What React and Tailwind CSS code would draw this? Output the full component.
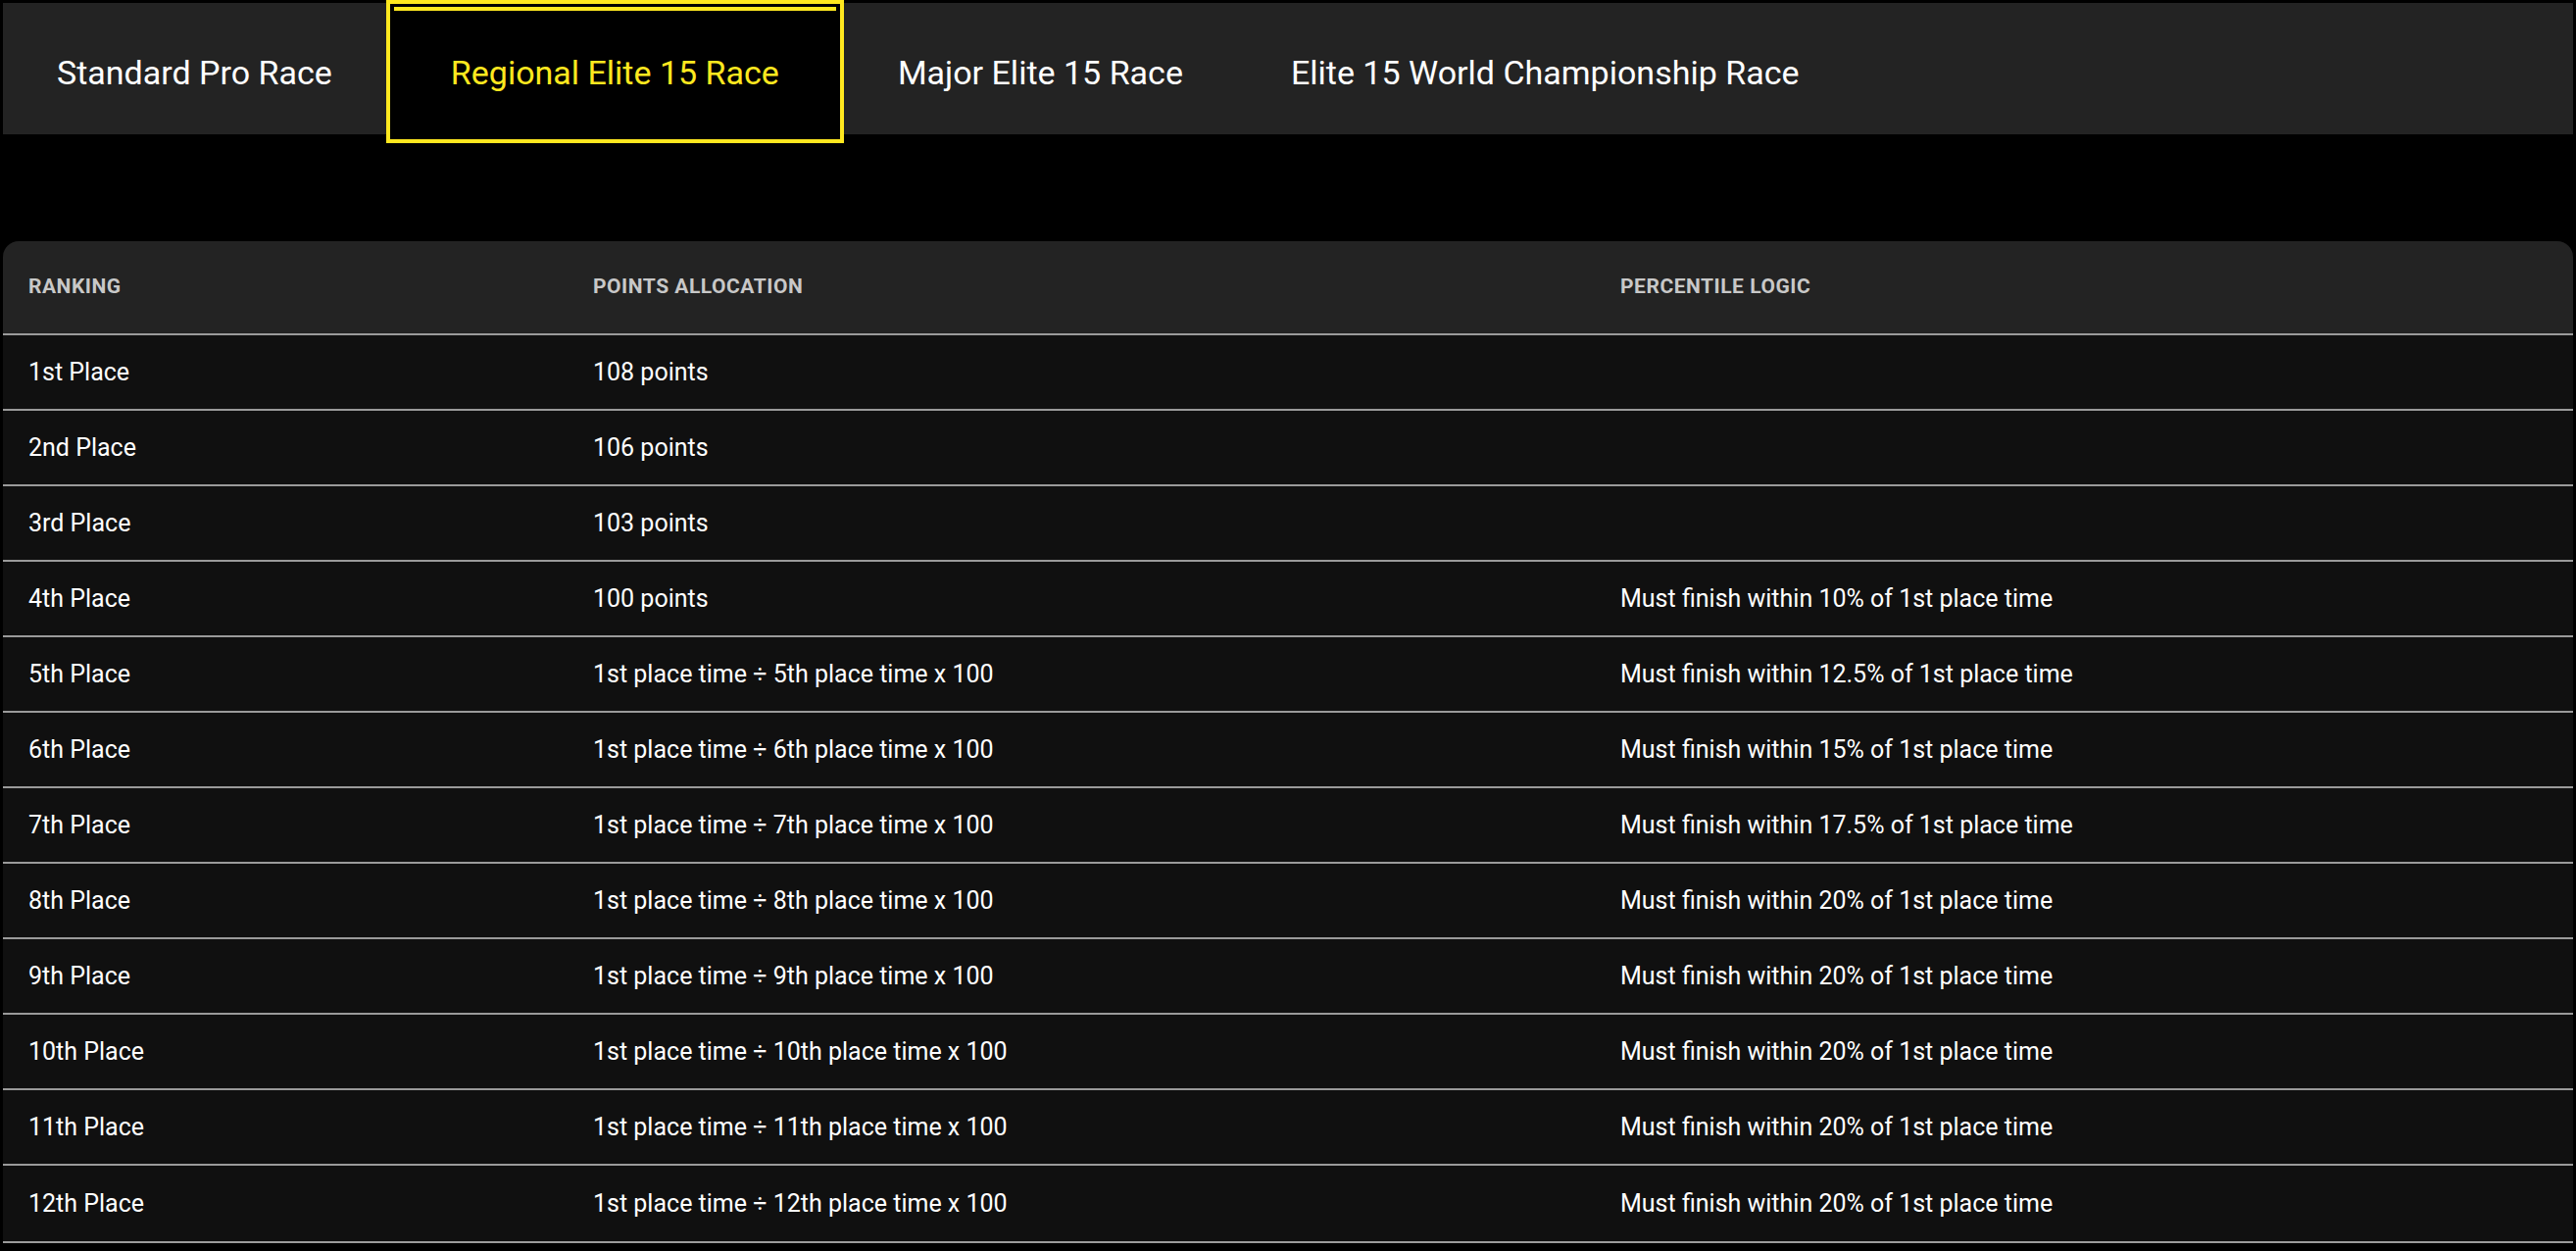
const tabs = ['Standard Pro Race', 'Regional Elite 15 Race', 'Major Elite 15 Race', 'Elite 15 World Championship Race'];

const rows = [
  ['1st Place', '108 points', ''],
  ['2nd Place', '106 points', ''],
  ['3rd Place', '103 points', ''],
  ['4th Place', '100 points', 'Must finish within 10% of 1st place time'],
  ['5th Place', '1st place time ÷ 5th place time x 100', 'Must finish within 12.5% of 1st place time'],
  ['6th Place', '1st place time ÷ 6th place time x 100', 'Must finish within 15% of 1st place time'],
  ['7th Place', '1st place time ÷ 7th place time x 100', 'Must finish within 17.5% of 1st place time'],
  ['8th Place', '1st place time ÷ 8th place time x 100', 'Must finish within 20% of 1st place time'],
  ['9th Place', '1st place time ÷ 9th place time x 100', 'Must finish within 20% of 1st place time'],
  ['10th Place', '1st place time ÷ 10th place time x 100', 'Must finish within 20% of 1st place time'],
  ['11th Place', '1st place time ÷ 11th place time x 100', 'Must finish within 20% of 1st place time'],
  ['12th Place', '1st place time ÷ 12th place time x 100', 'Must finish within 20% of 1st place time'],
];

export default function App() {
  const active = 1;
  return (
    <div className="min-h-[1276px] bg-black px-[3px] font-[Roboto,sans-serif] text-white">
      {/* tabs */}
      <div className="relative flex h-[146px] items-start">
        <div className="absolute left-0 right-0 top-[3px] h-[134px] bg-[#232323]" />
        {tabs.map((t, i) =>
          i === active ? (
            <div key={t} className="relative flex h-[146px] items-start border-4 border-[#ffe81f] bg-black px-[62px]">
              <div className="absolute left-[4px] right-[4px] top-[3px] h-[4px] bg-[#ffe81f]" />
              <span className="mt-[50px] text-[34px] leading-[40px] text-[#ffe81f]">{t}</span>
            </div>
          ) : (
            <div key={t} className="relative flex h-[137px] items-start px-[55px]">
              <span className="mt-[54px] text-[34px] leading-[40px]">{t}</span>
            </div>
          )
        )}
      </div>

      {/* table */}
      <div className="mt-[100px] overflow-hidden rounded-t-[16px] border-b-2 border-[#9a9a9a]">
        <div className="flex h-[96px] items-center border-b-2 border-[#9a9a9a] bg-[#232323] pl-[26px] text-[21px] font-bold tracking-wide text-[#c8c8c8]">
          <div className="w-[576px]">RANKING</div>
          <div className="w-[1048px]">POINTS ALLOCATION</div>
          <div>PERCENTILE LOGIC</div>
        </div>
        {rows.map((r, i) => (
          <div
            key={r[0]}
            className={`flex h-[77px] items-center bg-[#101010] pl-[26px] text-[25px] ${i < rows.length - 1 ? 'border-b-2 border-[#9a9a9a]' : ''}`}
          >
            <div className="w-[576px]">{r[0]}</div>
            <div className="w-[1048px]">{r[1]}</div>
            <div>{r[2]}</div>
          </div>
        ))}
      </div>
    </div>
  );
}
